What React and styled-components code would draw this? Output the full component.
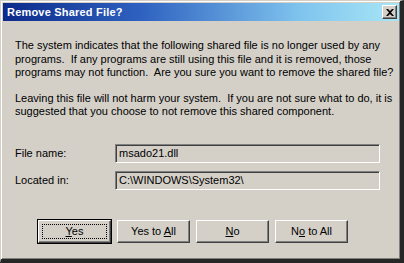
import React from "react";
import styled, { createGlobalStyle } from "styled-components";

const GlobalStyle = createGlobalStyle`
  html, body {
    margin: 0;
    padding: 0;
    background: #ffffff;
  }
  body {
    font-family: "Liberation Sans", Arial, sans-serif;
    font-size: 11px;
    color: #000;
  }
`;

const Window = styled.div`
  box-sizing: border-box;
  width: 404px;
  height: 263px;
  background: #d4d0c8;
  border-top: 1px solid #d4d0c8;
  border-left: 1px solid #d4d0c8;
  border-right: 4px solid #262626;
  border-bottom: 4px solid #262626;
  box-shadow: inset 1px 1px 0 #ffffff, inset -1px -1px 0 #808080;
  padding: 2px 1px 0 2px;
  display: flex;
  flex-direction: column;
`;

const TitleBar = styled.div`
  height: 18px;
  display: flex;
  align-items: center;
  justify-content: space-between;
  padding: 0 2px 0 4px;
  background: linear-gradient(to right, #0c2a8a 0%, #2f62c0 35%, #7fc4ee 75%, #a8e6f6 100%);
`;

const Title = styled.span`
  color: #fff;
  font-weight: bold;
  font-size: 11px;
  letter-spacing: 0.2px;
`;

const CloseButton = styled.div`
  box-sizing: border-box;
  width: 15px;
  height: 14px;
  background: #d4d0c8;
  border-top: 1px solid #ffffff;
  border-left: 1px solid #ffffff;
  border-right: 1px solid #404040;
  border-bottom: 1px solid #404040;
  box-shadow: inset -1px -1px 0 #808080;
  display: flex;
  align-items: center;
  justify-content: center;
`;

const Body = styled.div`
  flex: 1;
  padding: 18px 10px 0 12px;
  display: flex;
  flex-direction: column;
`;

const Paragraph = styled.p`
  margin: 0 0 ${({ gap }) => gap}px 0;
  line-height: 13.5px;
  white-space: pre;
`;

const FieldGrid = styled.div`
  display: grid;
  grid-template-columns: 100px 265px;
  row-gap: 8px;
  align-items: center;
  margin-top: 25px;
`;

const Label = styled.span`
  line-height: 18px;
`;

const Field = styled.div`
  box-sizing: border-box;
  height: 19px;
  padding: 0 3px;
  display: flex;
  align-items: center;
  background: #d4d0c8;
  border-top: 1px solid #808080;
  border-left: 1px solid #808080;
  border-right: 1px solid #ffffff;
  border-bottom: 1px solid #ffffff;
  box-shadow: inset 1px 1px 0 #404040;
`;

const ButtonRow = styled.div`
  display: flex;
  gap: 6px;
  margin-top: 30px;
  padding-left: 23px;
`;

const Button = styled.div`
  box-sizing: border-box;
  width: 73px;
  height: 23px;
  display: flex;
  align-items: center;
  justify-content: center;
  background: #d4d0c8;
  border-top: 1px solid #ffffff;
  border-left: 1px solid #ffffff;
  border-right: 1px solid #404040;
  border-bottom: 1px solid #404040;
  box-shadow: inset -1px -1px 0 #808080;
  outline: ${({ $default }) => ($default ? "1px solid #000" : "none")};
  position: relative;
`;

const Focus = styled.span`
  position: absolute;
  inset: 3px;
  border: 1px dotted #000;
`;

const Key = styled.span`
  text-decoration: underline;
`;

export default function App() {
  return (
    <>
      <GlobalStyle />
      <Window>
        <TitleBar>
          <Title>Remove Shared File?</Title>
          <CloseButton>
            <svg width="8" height="7" viewBox="0 0 8 7">
              <path d="M0 0h2l2 2 2-2h2L5 3.5 8 7H6L4 5 2 7H0l3-3.5z" fill="#000" />
            </svg>
          </CloseButton>
        </TitleBar>
        <Body>
          <Paragraph gap={12}>
            {"The system indicates that the following shared file is no longer used by any\nprograms.  If any programs are still using this file and it is removed, those\nprograms may not function.  Are you sure you want to remove the shared file?"}
          </Paragraph>
          <Paragraph gap={0}>
            {"Leaving this file will not harm your system.  If you are not sure what to do, it is\nsuggested that you choose to not remove this shared component."}
          </Paragraph>
          <FieldGrid>
            <Label>File name:</Label>
            <Field>msado21.dll</Field>
            <Label>Located in:</Label>
            <Field>C:\WINDOWS\System32\</Field>
          </FieldGrid>
          <ButtonRow>
            <Button $default>
              <Focus />
              <span><Key>Y</Key>es</span>
            </Button>
            <Button>
              <span>Yes to <Key>A</Key>ll</span>
            </Button>
            <Button>
              <span><Key>N</Key>o</span>
            </Button>
            <Button>
              <span>N<Key>o</Key> to All</span>
            </Button>
          </ButtonRow>
        </Body>
      </Window>
    </>
  );
}
